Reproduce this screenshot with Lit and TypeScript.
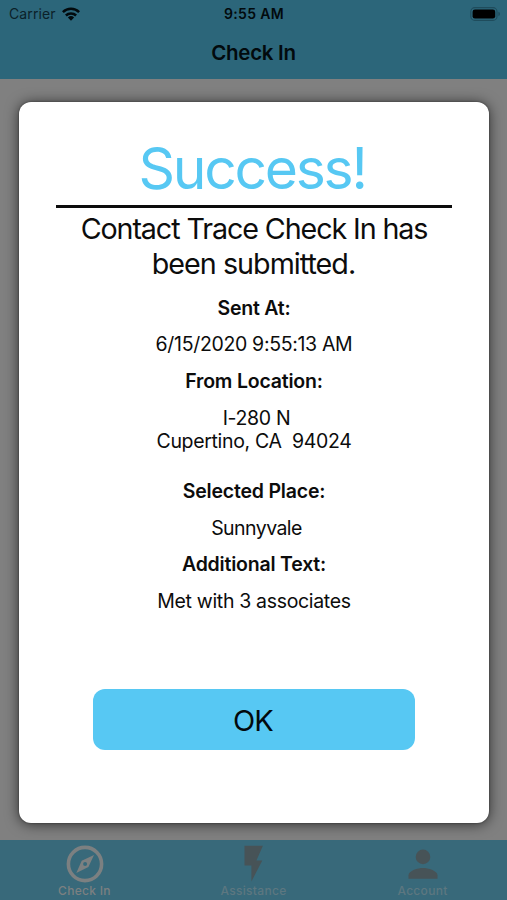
import { LitElement, html, css, svg } from "lit";
import { customElement } from "lit/decorators.js";

const wifi = svg`<svg class="wifi" viewBox="0 0 18 14"><g fill="none" stroke="#020a0d" stroke-width="2.5"><path d="M.9 5.2a11.5 11.5 0 0 1 16.2 0"/><path d="M3.9 8.5a7.2 7.2 0 0 1 10.2 0"/></g><path fill="#020a0d" d="M5.9 10.5a4.5 4.5 0 0 1 6.2 0L9 13.7z"/></svg>`;

const battery = svg`<svg class="battery" viewBox="0 0 31 14"><rect x=".8" y=".6" width="26.2" height="12.8" rx="4" fill="none" stroke="#1f4c5c" stroke-width="1.1"/><rect x="2.6" y="2.4" width="22.6" height="9.2" rx="2.4" fill="#000"/><path d="M28.4 4.8q1.6.6 1.6 2.2t-1.6 2.2z" fill="#1f4c5c"/></svg>`;

const compass = svg`<svg viewBox="0 0 38 38"><circle cx="19" cy="19" r="16.6" fill="none" stroke="#7c8081" stroke-width="3.6"/><path fill="#7c8081" fill-rule="evenodd" d="M28 10 22.4 22 10.3 28 15.7 15.8ZM19.1 16.9a2 2 0 1 0 0 4 2 2 0 0 0 0-4Z"/></svg>`;

const bolt = svg`<svg viewBox="0 0 38 38"><path fill="#475357" d="M9.5.8H27.9L21.4 15.5H27.3L16.4 36.6V20.5H9.5Z"/></svg>`;

const person = svg`<svg viewBox="0 0 38 38"><circle cx="19" cy="11.9" r="7.3" fill="#475357"/><path fill="#475357" d="M4.5 33.8v-3.5c0-4.8 9.7-7.3 14.5-7.3s14.5 2.5 14.5 7.3v3.5z"/></svg>`;

@customElement("app-root")
export class AppRoot extends LitElement {
  static styles = css`
    :host {
      display: flex;
      flex-direction: column;
      height: 900px;
      background: #808080;
      font-family: Inter, "Liberation Sans", sans-serif;
      color: #020a0d;
      overflow: hidden;
    }
    header {
      height: 79px;
      flex: none;
      background: #2c667a;
    }
    .status {
      display: grid;
      grid-template-columns: 1fr auto 1fr;
      align-items: center;
      height: 27px;
      padding: 0 6px 0 9px;
      font-size: 14px;
      line-height: 27px;
    }
    .carrier {
      display: flex;
      align-items: center;
      gap: 6px;
      color: #0b2129;
      letter-spacing: 0.1px;
    }
    .wifi { width: 18px; height: 14px; }
    .battery { width: 31px; height: 14px; justify-self: end; }
    .clock { font-weight: 600; letter-spacing: 0.35px; margin-right: 2px; }
    h1 {
      margin: 0;
      font-size: 20.5px;
      line-height: 51px;
      font-weight: 600;
      text-align: center;
      letter-spacing: -0.3px;
    }
    main {
      flex: 1;
      padding: 23px 18px 17px 19px;
      display: flex;
      background: #808080;
    }
    .card {
      flex: 1;
      display: flex;
      flex-direction: column;
      align-items: center;
      background: #fff;
      border-radius: 12px;
      box-shadow: 0 1px 14px rgba(0, 0, 0, 0.65), 0 0 2px rgba(0, 0, 0, 0.5);
      padding-top: 33px;
      box-sizing: border-box;
      color: #0c0c0c;
      text-align: center;
    }
    h2 {
      margin: 0;
      font-size: 57px;
      line-height: 68px;
      font-weight: 400;
      color: #57c8f3;
      letter-spacing: -2.25px;
      text-indent: -4px;
    }
    .rule { width: 396px; height: 2.5px; margin-top: 2px; background: #0c0c0c; }
    .message { margin-top: 3px; font-size: 28.7px; line-height: 35px; letter-spacing: -1.1px; }
    .second { letter-spacing: -0.98px; padding-right: 1px; }
    .details { margin: 16px 0 0; font-size: 19.5px; line-height: 23px; }
    dt { font-weight: 600; letter-spacing: -0.2px; }
    dd { margin: 13.75px 0; white-space: pre; letter-spacing: -0.33px; }
    .nudged { padding-left: 5px; }
    .address { margin-bottom: 27px; }
    .place { letter-spacing: -0.55px; }
    button {
      margin: 62px 0 0;
      width: 322px;
      height: 61px;
      border: 0;
      border-radius: 12px;
      background: #57c8f3;
      color: #020a0d;
      font: 400 29px/61px Inter, "Liberation Sans", sans-serif;
      letter-spacing: -0.9px;
      padding: 1px 2px 0 0;
    }
    nav {
      flex: none;
      height: 60px;
      display: grid;
      grid-template-columns: repeat(3, 1fr);
      background: #38697a;
    }
    .tab {
      display: flex;
      flex-direction: column;
      align-items: center;
      padding-top: 4.5px;
      font-size: 12px;
      line-height: 15px;
      font-weight: 500;
      letter-spacing: 0.3px;
      color: #5d7780;
    }
    .tab svg { width: 38px; height: 38px; margin-bottom: 0.5px; }
    .active { color: #7c8081; }
  `;

  render() {
    return html`
      <header>
        <div class="status">
          <span class="carrier"><span>Carrier</span>${wifi}</span>
          <span class="clock">9:55 AM</span>
          ${battery}
        </div>
        <h1>Check In</h1>
      </header>
      <main>
        <section class="card">
          <h2>Success!</h2>
          <div class="rule"></div>
          <div class="message">Contact Trace Check In has<br /><span class="second">been submitted.</span></div>
          <dl class="details">
            <dt>Sent At:</dt>
            <dd>6/15/2020 9:55:13 AM</dd>
            <dt>From Location:</dt>
            <dd class="address"><span class="nudged">I-280 N</span><br />Cupertino, CA  94024</dd>
            <dt>Selected Place:</dt>
            <dd class="nudged place">Sunnyvale</dd>
            <dt>Additional Text:</dt>
            <dd>Met with 3 associates</dd>
          </dl>
          <button>OK</button>
        </section>
      </main>
      <nav>
        <div class="tab active">${compass}<span>Check In</span></div>
        <div class="tab">${bolt}<span>Assistance</span></div>
        <div class="tab">${person}<span>Account</span></div>
      </nav>
    `;
  }
}
